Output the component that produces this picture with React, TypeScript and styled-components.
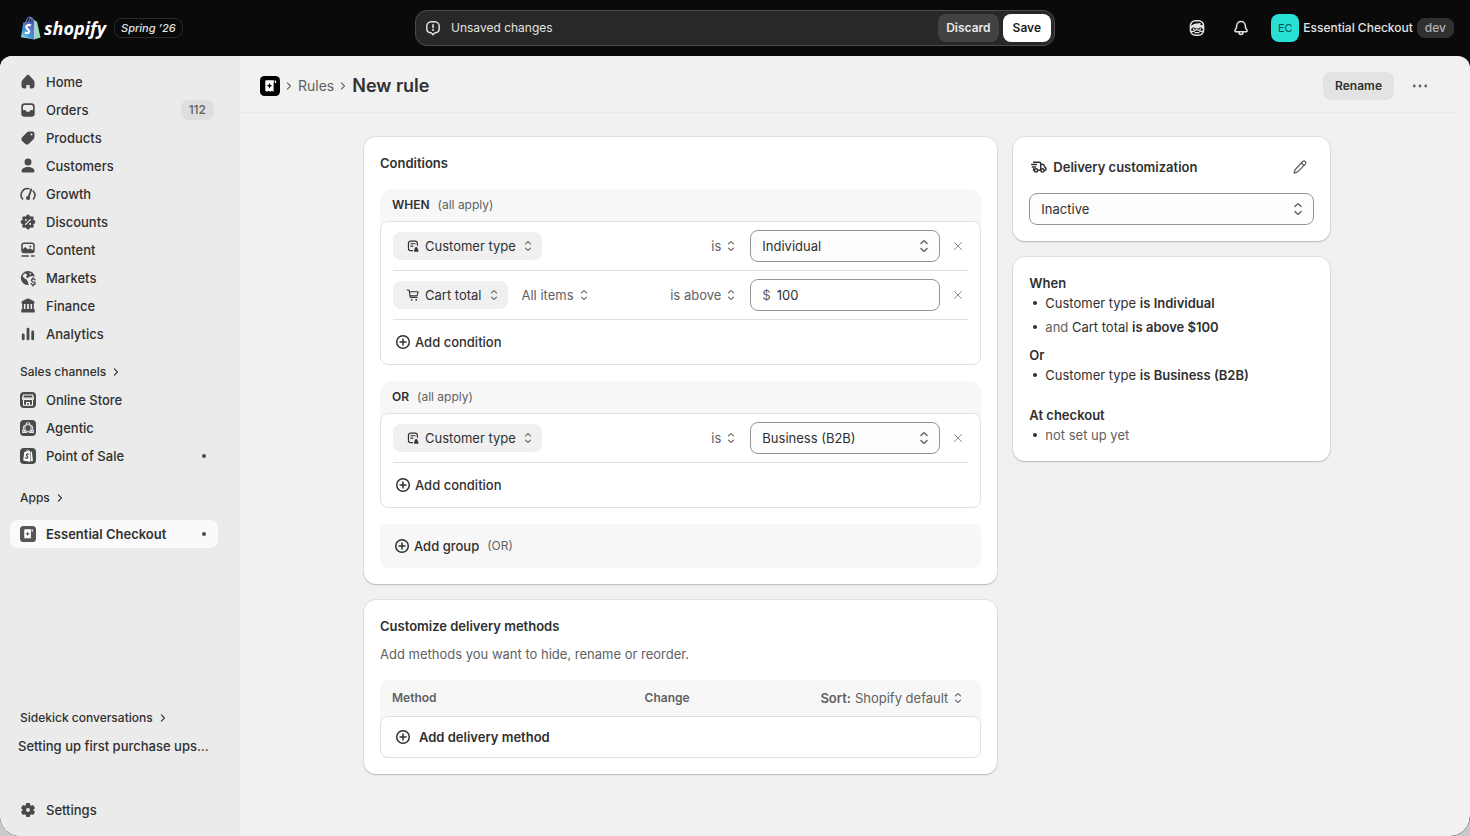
import React, { useId } from "react";
import styled, { createGlobalStyle } from "styled-components";

const color = {
  ink: "#303030",
  strong: "#1f1f1f",
  muted: "#616161",
  icon: "#4a4a4a",
  faint: "#8a8a8a",
  outline: "#949494",
  line: "#e0e0e0",
  subtle: "#f7f7f7",
  page: "#f1f1f1",
  nav: "#ebebeb",
  bar: "#0a0a0a",
};

const GlobalStyle = createGlobalStyle`
  *, *::before, *::after { box-sizing: border-box; }
  body {
    margin: 0;
    background: #c9c9c9;
    color: ${color.ink};
    font-family: Inter, "Liberation Sans", sans-serif;
    font-size: 13px;
    line-height: 20px;
    -webkit-font-smoothing: antialiased;
  }
  button, input, select { font: inherit; color: inherit; }
  button { cursor: pointer; }
  h1, h2, h3, p, ul { margin: 0; padding: 0; }
  h1, h2, h3 { font-size: inherit; }
  a { color: inherit; text-decoration: none; }
`;

/* ---------- icons ---------- */

const Glyph = styled.svg<{ $size?: number }>`
  display: block;
  flex: none;
  width: ${(p) => p.$size ?? 20}px;
  height: ${(p) => p.$size ?? 20}px;
  fill: none;
  stroke: currentColor;
  stroke-width: 1.5;
  stroke-linecap: round;
  stroke-linejoin: round;
`;

type IconProps = { size?: number };
const icon = (body: React.ReactNode) =>
  function Icon({ size }: IconProps) {
    return (
      <Glyph viewBox="0 0 20 20" $size={size} aria-hidden="true">
        {body}
      </Glyph>
    );
  };

const HomeIcon = icon(
  <path
    fill="currentColor"
    stroke="none"
    d="M8.344 3.692a2.25 2.25 0 0 1 3.312 0l3.854 4.19a3.75 3.75 0 0 1 .99 2.538v3.33a2.75 2.75 0 0 1-2.75 2.75h-1.25a.75.75 0 0 1-.75-.75v-2a.75.75 0 0 0-.75-.75h-2a.75.75 0 0 0-.75.75v2a.75.75 0 0 1-.75.75h-1.25a2.75 2.75 0 0 1-2.75-2.75v-3.33c0-.94.353-1.846.99-2.539l3.854-4.189Z"
  />
);
const OrdersIcon = icon(
  <path
    fill="currentColor"
    stroke="none"
    fillRule="evenodd"
    d="M6.500 3.300h7a3.200 3.200 0 0 1 3.200 3.200v7a3.200 3.200 0 0 1-3.200 3.200h-7a3.200 3.200 0 0 1-3.200-3.200v-7a3.200 3.200 0 0 1 3.200-3.200Zm0 1.700A1.500 1.500 0 0 0 5 6.500v3.500h1.900c.5 0 .8.3 1 .7.3.7 1.100 1.200 2.100 1.200s1.800-.5 2.100-1.200c.2-.4.5-.7 1-.7H15V6.500A1.500 1.500 0 0 0 13.500 5Z"
  />
);
const ProductsIcon = icon(
  <path
    fill="currentColor"
    stroke="none"
    fillRule="evenodd"
    d="M11.200 3.500h3.050a2.250 2.250 0 0 1 2.250 2.250V8.800c0 .9-.36 1.770-1 2.400l-4.400 4.400a3 3 0 0 1-4.250 0l-2.450-2.450a3 3 0 0 1 0-4.250l4.400-4.400a3.400 3.400 0 0 1 2.400-1Zm2.300 4a1 1 0 1 0 0-2 1 1 0 0 0 0 2Z"
  />
);
const CustomersIcon = icon(
  <g fill="currentColor" stroke="none">
    <circle cx="10" cy="6" r="3.500" />
    <path d="M10 11c-3.700 0-6.500 1.900-6.500 4 0 .9.700 1.500 1.600 1.500h9.800c.9 0 1.600-.6 1.600-1.500 0-2.100-2.800-4-6.500-4Z" />
  </g>
);
const GrowthIcon = icon(
  <>
    <path strokeWidth="1.600" d="M4.600 15A6.400 6.400 0 0 1 11 4.700M15.200 7a6.400 6.400 0 0 1 .3 8" />
    <path strokeWidth="1.900" d="M13.200 5.500 10.600 13" />
    <circle cx="10.100" cy="14" r="2.100" fill="currentColor" stroke="none" />
  </>
);
const scallops = [0, 1, 2, 3, 4, 5, 6, 7].map((n) => {
  const turn = (n * Math.PI) / 4;
  return [10 + 5.500 * Math.cos(turn), 10 + 5.500 * Math.sin(turn)];
});
const DiscountsIcon = icon(
  <>
    <g fill="currentColor" stroke="none">
      <circle cx="10" cy="10" r="5.900" />
      {scallops.map(([x, y], n) => (
        <circle key={n} cx={x} cy={y} r="1.900" />
      ))}
    </g>
    <path stroke={color.nav} strokeWidth="1.300" d="m7.600 12.400 4.800-4.800" />
    <circle cx="7.900" cy="7.900" r="1" fill={color.nav} stroke="none" />
    <circle cx="12.100" cy="12.100" r="1" fill={color.nav} stroke="none" />
  </>
);
const ContentIcon = icon(
  <>
    <rect x="3.950" y="3.250" width="12.100" height="9.200" rx="2.200" />
    <path
      fill="currentColor"
      stroke="none"
      d="M4 9.800 6.300 7.700c.6-.5 1.300-.5 1.900 0L10 9.400l.9-.6c.6-.4 1.200-.4 1.800 0L16 10.500v1.600l-1.500.9h-9L4 12Z"
    />
    <circle cx="12.300" cy="6.500" r="1.100" fill="currentColor" stroke="none" />
    <path d="M3.950 15.950h6.300M13.500 15.950h2.550" />
  </>
);
const MarketsIcon = icon(
  <>
    <path
      fill="currentColor"
      stroke="none"
      fillRule="evenodd"
      d="M10 3a7 7 0 1 0 1 13.900c-.8-.6-1.200-1.500-.8-2.300l-1.200-2.400c-.5-1-1.400-1-2.200-1.700L4.600 8.400A5.600 5.600 0 0 1 7 5.300l1.700 1.200c.6.400.5 1.200 0 1.600l-.9.900 1.900 1.300c.8-1.400 2.200-2.200 3.600-2 1.300-.8 2.400-.2 3.500.4A7 7 0 0 0 10 3Zm1.200 1.700 2.300.9-1.300 1.300Z"
    />
    <path
      strokeWidth="1.400"
      d="M17 11.700c-.6-.7-1.500-.9-2.300-.7-1.600.3-1.700 2.100-.1 2.600 1.700.4 2.700.8 2.500 2-.3 1.300-2.800 1.500-3.900.2M15 9.700v1M15 17v1"
    />
  </>
);
const FinanceIcon = icon(
  <g fill="currentColor" stroke="none">
    <path d="M8.900 2.800a2.300 2.300 0 0 1 2.200 0l4.500 2.300c1.500.8 1.200 2.900-.4 2.900H4.800c-1.600 0-1.900-2.100-.4-2.900Z" />
    <path d="M4.200 7.500h1.700v6H4.200ZM7.500 7.500h1.600v6H7.500ZM10.900 7.500h1.600v6h-1.600ZM14.100 7.500h1.700v6h-1.700Z" />
    <rect x="3.200" y="13" width="13.600" height="3.600" rx="1.200" />
  </g>
);
const AnalyticsIcon = icon(
  <path strokeWidth="2.800" d="M5.200 11v3.900M10 5.100v9.800M14.700 7.900v7" />
);
const SettingsIcon = icon(
  <>
    <path
      fill="currentColor"
      strokeWidth="1.200"
      d="M8.700 3.700h2.600l.5 1.900 1.300.8 1.900-.6 1.300 2.300-1.400 1.300v1.200l1.400 1.300-1.300 2.300-1.900-.6-1.300.8-.5 1.900H8.700l-.5-1.900-1.300-.8-1.900.6-1.300-2.300 1.400-1.300V9.400L3.700 8.100 5 5.800l1.900.6 1.300-.8Z"
    />
    <circle cx="10" cy="10" r="1.900" fill={color.nav} stroke="none" />
  </>
);
const UpDownIcon = icon(
  <path
    strokeWidth="1.400"
    d="M6.900 7.400 9.500 4.900c.3-.3.700-.3 1 0l2.600 2.500M6.900 12.600l2.600 2.500c.3.300.7.300 1 0l2.600-2.500"
  />
);
const ChevronRight = icon(<path strokeWidth="1.400" d="m8 6.200 3.800 3.800L8 13.800" />);
const PlusCircle = icon(
  <>
    <circle cx="10" cy="10" r="6.300" />
    <path d="M10 7v6M7 10h6" />
  </>
);
const CloseIcon = icon(<path strokeWidth="1.200" d="m5.600 5.600 8.800 8.800M14.400 5.600l-8.800 8.800" />);
const ProfileFieldIcon = icon(
  <>
    <path d="M9.300 15.900H7a2.700 2.700 0 0 1-2.700-2.700V6.500A2.700 2.700 0 0 1 7 3.800h5.800a2.700 2.700 0 0 1 2.700 2.700V9.200M7.300 7.200h5.200M7.300 10.200h2.400" />
    <circle cx="14" cy="13" r="1.900" fill="currentColor" stroke="none" />
    <path
      fill="currentColor"
      stroke="none"
      d="M14 13.800c-1.800 0-2.900 1-2.900 2.200 0 .7.500 1.200 1.100 1.200h3.600c.6 0 1.100-.5 1.100-1.200 0-1.200-1.100-2.200-2.900-2.200Z"
    />
  </>
);
const CartIcon = icon(
  <>
    <path
      strokeWidth="1.400"
      d="M2.800 3.800h1.300c.7 0 1.200.5 1.300 1.200l1 7c.1.600.6 1 1.200 1h7.600M5.600 6h10.700l-.9 4c-.1.600-.6 1-1.200 1H6.500"
    />
    <circle cx="8.300" cy="16" r="1.100" fill="currentColor" stroke="none" />
    <circle cx="14" cy="16" r="1.100" fill="currentColor" stroke="none" />
  </>
);
const TruckIcon = icon(
  <>
    <path d="M4.600 5.250h5.900c.7 0 1.200.5 1.200 1.200v6.300M11.900 7.300h1.400c.8 0 1.500.5 1.800 1.200l.5 1.300.7.500c.4.200.6.600.6 1v.9c0 .6-.5 1.100-1.100 1.100M9.300 13.250h2M4.600 13.250v-1.400M2.700 7.500h4.600M3.400 9.900h3.200" />
    <circle cx="7" cy="13.400" r="1.600" />
    <circle cx="13.500" cy="13.400" r="1.600" />
  </>
);
const PencilIcon = icon(
  <path
    strokeWidth="1.300"
    d="M12.800 4.500a1.850 1.850 0 0 1 2.600 2.600l-7.300 7.300c-.5.500-1 .8-1.700 1l-2.300.6.600-2.300c.2-.7.500-1.200 1-1.700ZM11.400 6l2.600 2.600"
  />
);
const DotsIcon = icon(
  <g fill="currentColor" stroke="none">
    <circle cx="4.300" cy="10" r="1.400" />
    <circle cx="10" cy="10" r="1.400" />
    <circle cx="15.700" cy="10" r="1.400" />
  </g>
);
const AlertIcon = icon(
  <>
    <path d="M8.300 3.800h3.400a4.500 4.500 0 0 1 4.500 4.500v2.200c0 2.300-1.600 4-3.700 4.200-.5.050-.9.250-1.200.6L10 16.600l-1.300-1.300c-.3-.350-.7-.550-1.200-.6-2.100-.2-3.700-1.900-3.700-4.200V8.300a4.500 4.500 0 0 1 4.500-4.500Z" />
    <path strokeWidth="1.600" d="M10 6.900v2.700" />
    <circle cx="10" cy="12.100" r="1" fill="currentColor" stroke="none" />
  </>
);
const BellIcon = icon(
  <>
    <path d="M10 3.500a4.300 4.300 0 0 0-4.300 4.300c0 1.400-.3 2.300-.9 3.200l-.8 1.200c-.4.7 0 1.500.8 1.500h10.400c.8 0 1.200-.8.800-1.500l-.8-1.200c-.6-.9-.9-1.800-.9-3.200A4.300 4.300 0 0 0 10 3.500Z" />
    <path d="M8 14c0 1.500.8 2.500 2 2.500s2-1 2-2.500" />
  </>
);
const SidekickIcon = icon(
  <>
    <rect x="3.400" y="2.800" width="13.200" height="14.400" rx="5" />
    <path
      fill="currentColor"
      stroke="none"
      d="M3 8.200C5 8 6.300 5.600 9 5.600l4.700-.5-.4 1.600 3.700.7v3.300h-1.800c-.7-1.500-3-1.400-3.900-.2h-2.600C7.800 9.300 5.500 9.200 4.800 10.700H3Z"
    />
    <path strokeWidth="1.300" d="M3.700 12.900c1.900 1.200 3.700.5 5-1.100h2.600c1.300 1.600 3.100 2.300 5 1.100M8 14.700h4" />
    <circle cx="6.700" cy="11.100" r=".9" fill="currentColor" stroke="none" />
    <circle cx="13.300" cy="11.100" r=".9" fill="currentColor" stroke="none" />
  </>
);

const StoreTile = icon(
  <>
    <rect x="2" y="2" width="16" height="16" rx="4" fill={color.icon} stroke="none" />
    <g stroke="#fff" strokeWidth="1.100">
      <path d="M5.500 5h9l1 3.200c0 1.700-2.600 1.900-3 .2-.3 1.700-2.300 1.700-2.500 0-.2 1.700-2.200 1.700-2.500 0-.4 1.700-3 1.500-3-.2ZM4.800 8h10.400M5.500 10.500v4.700h9v-4.700" />
      <path d="M8.600 15v-2.500h2.800V15" />
    </g>
  </>
);
const AgenticTile = icon(
  <>
    <rect x="2" y="2" width="16" height="16" rx="4" fill={color.icon} stroke="none" />
    <g stroke="#e6e6e6" strokeWidth="1.100">
      <path d="M7 12V8.300l1.600-1.600h2.800L13 8.300V12l-1.300 1.300H8.300Z" />
      <path d="M8 6.500c0-2.300 4-2.300 4 0M6.500 7.500 5.300 9v3.500M13.500 7.500 14.700 9v3.500M4.800 14.400h4M11.200 14.400h4" />
      <circle cx="5.600" cy="13.500" r="1.100" />
      <circle cx="14.400" cy="13.500" r="1.100" />
    </g>
  </>
);
const PosTile = icon(
  <>
    <rect x="2" y="2" width="16" height="16" rx="4" fill={color.icon} stroke="none" />
    <path fill="#fff" stroke="none" d="m6.200 6.200 5.800-1.400v11L5.200 14.600ZM12.600 5.200l1.300.9 1 8.700-2.300.8Z" />
    <path stroke="#fff" strokeWidth=".9" d="M7.700 6.300c.3-1.700 2.200-3.200 2.900-1.500" />
    <path stroke={color.icon} strokeWidth="1.300" d="M10.600 8.200c-1.100-.6-2.400-.1-2.200.9.200.9 1.600 1.100 1.400 2.300-.2 1-1.500 1-2.300.4" />
  </>
);

function CheckoutTile({ size, tone }: { size?: number; tone: string }) {
  return (
    <Glyph viewBox="0 0 20 20" $size={size} aria-hidden="true">
      <rect width="20" height="20" rx="4.500" fill={tone} stroke="none" />
      <path
        fill="#fff"
        stroke="none"
        d="M6.300 4.200h8.300c.9 0 1.600.7 1.600 1.600v1.100h-2.600v8.900l-1.700-1-1.600 1-1.700-1-1.600 1-1.700-1V5.200c0-.6.400-1 1-1Z"
      />
      <path d="M14.300 4.600v2" stroke={tone} strokeWidth="1" />
      <path fill={tone} stroke="none" d="m9.500 6.800.9 2.200 2 .8-2 .8-.9 2.200-.9-2.200-2-.8 2-.8Z" />
    </Glyph>
  );
}

const BagSvg = styled.svg`
  display: block;
  width: 22px;
  height: 24px;
`;

function ShopifyBag() {
  const id = useId();
  return (
    <BagSvg viewBox="0 0 22 24" aria-hidden="true">
      <defs>
        <linearGradient id={id} x1="0.8" y1="0" x2="0.2" y2="1">
          <stop offset="0" stopColor="#44509c" />
          <stop offset=".35" stopColor="#5577c4" />
          <stop offset=".65" stopColor="#3f93d8" />
          <stop offset="1" stopColor="#9fe0ea" />
        </linearGradient>
      </defs>
      <path d="M6 6.500C6.500 3.500 8.300 1.100 10 1.200c1.600.1 2 2.300 2 4.600M8.500 6.200c.5-2.400 2.200-4.500 3.600-4 1 .5 1.400 2 1.400 3.400" fill="none" stroke="#6a80c4" strokeWidth="1.200" />
      <path d="M3.200 6.600 13.900 4.200v19.200L1 21.200Z" fill={`url(#${id})`} />
      <path d="m13.900 4.200 3.200 1.500 3.400 15.700-6.600 2Z" fill="#8fdcae" />
      <path d="m13.900 4.200 2 .9.600 17.500-2.600.8Z" fill="#bfc4ee" opacity=".8" />
      <path d="M10.900 9.400c-2.200-1.100-4.800-.1-4.500 2 .3 1.900 3.100 2.100 2.800 4.200-.3 1.900-2.700 1.800-4.200.7" fill="none" stroke="#fff" strokeWidth="2.300" />
    </BagSvg>
  );
}

/* ---------- top bar ---------- */

const Shell = styled.div`
  display: flex;
  flex-direction: column;
  min-height: 100vh;
  overflow: hidden;
  border-radius: 0 0 20px 20px;
  background: ${color.bar};
`;

const TopBar = styled.header`
  display: grid;
  grid-template-columns: 1fr minmax(0, 640px) 1fr;
  align-items: center;
  height: 56px;
  padding: 0 16px;
  color: #e3e3e3;
  font-size: 12px;
`;

const Brand = styled.a`
  display: flex;
  align-items: center;
  gap: 2px;
  padding-left: 4px;
`;

const Wordmark = styled.span`
  color: #fff;
  font: italic 700 18px/24px "Open Sans", "Noto Sans", sans-serif;
`;

const Season = styled.span`
  margin-left: 6px;
  padding: 0 6px;
  border: 1px solid #2a2a2a;
  border-radius: 8px;
  font-size: 11px;
  font-style: italic;
  font-weight: 500;
  line-height: 18px;
`;

const SaveBar = styled.div`
  display: flex;
  align-items: center;
  gap: 4px;
  height: 36px;
  padding: 0 3px 0 7px;
  border: 1px solid #4a4a4a;
  border-radius: 12px;
  background: #282828;
`;

const SaveText = styled.span`
  flex: 1;
  padding-left: 4px;
`;

const BarButton = styled.button<{ $primary?: boolean }>`
  height: 28px;
  padding: 0 ${(p) => (p.$primary ? 10 : 8)}px;
  border: 0;
  border-radius: 8px;
  background: ${(p) => (p.$primary ? "#fff" : "#424242")};
  color: ${(p) => (p.$primary ? color.strong : "#e9e9e9")};
  font-weight: 600;
`;

const BarTools = styled.div`
  display: flex;
  align-items: center;
  justify-content: flex-end;
  gap: 16px;
`;

const IconButton = styled.button`
  display: grid;
  place-items: center;
  width: 28px;
  height: 28px;
  padding: 0;
  border: 0;
  border-radius: 8px;
  background: none;
`;

const Account = styled.button`
  display: flex;
  align-items: center;
  gap: 4px;
  padding: 0;
  border: 0;
  background: none;
  font-weight: 500;
`;

const Avatar = styled.span`
  display: grid;
  place-items: center;
  width: 28px;
  height: 28px;
  border-radius: 8px;
  background: #29e0d5;
  color: #0b4f4a;
  font-size: 11px;
  font-weight: 400;
`;

const DevTag = styled.span`
  padding: 0 8px;
  border-radius: 8px;
  background: #303030;
  color: #b5b5b5;
`;

/* ---------- navigation ---------- */

const Frame = styled.div`
  display: flex;
  flex: 1;
  overflow: hidden;
  border-radius: 12px 12px 20px 20px;
  background: ${color.page};
`;

const Sidebar = styled.nav`
  display: flex;
  flex: none;
  flex-direction: column;
  width: 240px;
  padding: 12px 22px 12px 10px;
  background: ${color.nav};
`;

const NavItem = styled.a<{ $active?: boolean }>`
  display: flex;
  align-items: center;
  gap: 8px;
  height: 28px;
  padding: 0 8px;
  border-radius: 8px;
  background: ${(p) => (p.$active ? "#fafafa" : "none")};
  font-weight: ${(p) => (p.$active ? 600 : 500)};
  white-space: nowrap;
  & > svg { color: ${color.icon}; }
`;

const NavLabel = styled.span`
  flex: 1;
  overflow: hidden;
  text-overflow: ellipsis;
`;

const Count = styled.span`
  margin-right: -4px;
  padding: 0 8px;
  border-radius: 8px;
  background: #dedede;
  color: ${color.muted};
  font-size: 12px;
`;

const Dot = styled.span`
  width: 4px;
  height: 4px;
  margin-right: 4px;
  border-radius: 50%;
  background: ${color.icon};
`;

const TileSlot = styled.span`
  display: grid;
  place-items: center;
  width: 20px;
`;

const NavHeading = styled.button`
  display: flex;
  align-items: center;
  gap: 2px;
  height: 28px;
  padding: 0 10px;
  border: 0;
  background: none;
  font-size: 12px;
  font-weight: 500;
`;

const NavSection = styled.div<{ $top: number; $gap?: number }>`
  display: flex;
  flex-direction: column;
  gap: ${(p) => p.$gap ?? 0}px;
  margin-top: ${(p) => p.$top}px;
`;

const NavFooter = styled.div`
  display: flex;
  flex-direction: column;
  margin-top: auto;
`;

const NavSettings = styled.div`
  margin-top: 36px;
`;

/* ---------- page ---------- */

const Main = styled.main`
  flex: 1;
  min-width: 0;
  padding-right: 16px;
`;

const PageHeader = styled.header`
  display: flex;
  align-items: center;
  justify-content: space-between;
  padding: 16px 20px 12px;
  border-bottom: 1px solid #e8e8e8;
`;

const Crumbs = styled.nav`
  display: flex;
  align-items: center;
  gap: 1px;
  color: ${color.muted};
  font-size: 14px;
`;

const Title = styled.h1`
  color: ${color.ink};
  font-size: 18px;
  font-weight: 600;
  line-height: 24px;
`;

const HeaderActions = styled.div`
  display: flex;
  align-items: center;
  gap: 12px;
  color: ${color.muted};
`;

const RenameButton = styled.button`
  height: 28px;
  padding: 0 12px;
  border: 0;
  border-radius: 8px;
  background: #e3e3e3;
  color: ${color.ink};
  font-size: 12px;
  font-weight: 600;
`;

const Columns = styled.div`
  display: grid;
  grid-template-columns: minmax(0, 2fr) minmax(0, 1fr);
  align-items: start;
  gap: 16px;
  max-width: 998px;
  margin: 0 auto;
  padding: 24px 16px;
`;

const Stack = styled.div`
  display: flex;
  flex-direction: column;
  gap: 16px;
`;

const Card = styled.section<{ $gap?: number }>`
  display: flex;
  flex-direction: column;
  gap: ${(p) => p.$gap ?? 16}px;
  padding: 16px;
  border-radius: 12px;
  background: #fff;
  box-shadow: 0 0 0 1px rgba(0, 0, 0, 0.07), 0 1px 1px rgba(0, 0, 0, 0.12),
    0 2px 3px rgba(0, 0, 0, 0.04);
`;

const CardTitle = styled.h2`
  font-weight: 600;
`;

const Group = styled.section`
  border-radius: 12px 12px 8px 8px;
  background: ${color.subtle};
`;

const GroupHead = styled.h3`
  display: flex;
  gap: 8px;
  padding: 6px 12px;
  font-size: 12px;
  font-weight: 600;
`;

const Hint = styled.span`
  color: ${color.muted};
  font-size: 12px;
  font-weight: 400;
`;

const GroupBody = styled.div`
  padding: 0 12px;
  border: 1px solid ${color.line};
  border-radius: 8px;
  background: #fff;
`;

const Row = styled.div`
  display: flex;
  align-items: center;
  gap: 8px;
  padding: 8px 0;
  border-bottom: 1px solid ${color.line};
`;

const RowFill = styled.div`
  flex: 1;
`;

const Pill = styled.label`
  display: flex;
  align-items: center;
  gap: 4px;
  height: 28px;
  padding: 0 6px 0 12px;
  border-radius: 8px;
  background: #f0f0f0;
`;

const InlineLabel = styled.label`
  display: flex;
  align-items: center;
  gap: 2px;
  padding: 0 3px 0 6px;
  color: ${color.muted};
`;

const BareSelect = styled.select`
  field-sizing: content;
  appearance: none;
  margin: 0;
  padding: 0;
  border: 0;
  outline: 0;
  background: none;
`;

const ChevronSlot = styled.span`
  display: grid;
  flex: none;
  place-items: center;
  color: ${color.muted};
  pointer-events: none;
`;

const Field = styled.label<{ $wide?: boolean; $plain?: boolean }>`
  display: grid;
  align-items: center;
  grid-template-columns: ${(p) => (p.$plain ? "auto minmax(0, 1fr)" : "minmax(0, 1fr) 20px")};
  width: ${(p) => (p.$wide ? "auto" : "190px")};
  height: 32px;
  padding: 0 5px 0 11px;
  border: 1px solid ${color.outline};
  border-radius: 8px;
  background: ${(p) => (p.$plain ? "#fff" : "#fdfdfd")};
  color: ${color.ink};
`;

const FieldSelect = styled.select`
  grid-area: 1 / 1 / 2 / 3;
  width: 100%;
  height: 30px;
  appearance: none;
  padding: 0;
  border: 0;
  outline: 0;
  background: none;
`;

const FieldChevron = styled(ChevronSlot)`
  grid-area: 1 / 2 / 2 / 3;
`;

const Currency = styled.span`
  padding-right: 6px;
  color: ${color.muted};
`;

const AmountInput = styled.input`
  min-width: 0;
  padding: 0;
  border: 0;
  outline: 0;
  background: none;
`;

const RemoveButton = styled(IconButton)`
  width: 20px;
  height: 20px;
  color: ${color.faint};
`;

const AddButton = styled.button<{ $loose?: boolean; $tall?: boolean; $inset?: boolean }>`
  display: flex;
  align-items: center;
  gap: ${(p) => (p.$loose ? 6 : 2)}px;
  width: 100%;
  height: ${(p) => (p.$tall ? 44 : 40)}px;
  padding: 0 ${(p) => (p.$inset ? 12 : 0)}px;
  border: 0;
  border-radius: 8px;
  background: ${(p) => (p.$inset && !p.$loose ? color.subtle : "none")};
  font-weight: ${(p) => (p.$loose ? 600 : 500)};
`;

const AddHint = styled(Hint)`
  margin-left: 6px;
`;

const Intro = styled.p`
  color: ${color.muted};
  padding-bottom: 8px;
`;

const MethodTable = styled.table`
  width: 100%;
  border-spacing: 0;
  border-radius: 8px;
  background: ${color.subtle};
`;

const Th = styled.th<{ $width?: string }>`
  width: ${(p) => p.$width ?? "auto"};
  height: 36px;
  padding: 0 12px;
  color: ${color.muted};
  font-size: 12px;
  font-weight: 600;
  text-align: left;
`;

const SortLabel = styled.label`
  display: flex;
  align-items: center;
  justify-content: flex-end;
  gap: 2px;
  padding-right: 3px;
  font-size: 13px;
  font-weight: 600;
  white-space: nowrap;
  & select { font-weight: 400; }
`;

const SortName = styled.span`
  padding-right: 2px;
`;

const MethodCell = styled.td`
  padding: 0;
  border: 1px solid ${color.line};
  border-radius: 8px;
  background: #fff;
`;

const SideHead = styled.div`
  display: flex;
  align-items: center;
  gap: 4px;
  & > h2 { flex: 1; }
`;

const EditButton = styled(IconButton)`
  color: ${color.muted};
`;

const Summary = styled.div<{ $top?: number }>`
  margin-top: ${(p) => p.$top ?? 0}px;
`;

const SummaryTitle = styled.h3`
  font-weight: 600;
`;

const SummaryList = styled.ul`
  display: flex;
  flex-direction: column;
  gap: 4px;
  list-style: none;
`;

const SummaryItem = styled.li<{ $muted?: boolean }>`
  display: flex;
  align-items: center;
  gap: 8px;
  padding-left: 4px;
  color: ${(p) => (p.$muted ? color.muted : color.ink)};
  &::before {
    width: 4px;
    height: 4px;
    border-radius: 50%;
    background: ${color.ink};
    content: "";
  }
  & b { font-weight: 600; }
  & i { color: ${color.muted}; font-style: normal; }
`;

/* ---------- composition ---------- */

const navItems: [string, React.ComponentType<IconProps>, string?][] = [
  ["Home", HomeIcon],
  ["Orders", OrdersIcon, "112"],
  ["Products", ProductsIcon],
  ["Customers", CustomersIcon],
  ["Growth", GrowthIcon],
  ["Discounts", DiscountsIcon],
  ["Content", ContentIcon],
  ["Markets", MarketsIcon],
  ["Finance", FinanceIcon],
  ["Analytics", AnalyticsIcon],
];

const channels: [string, React.ComponentType<IconProps>, boolean?][] = [
  ["Online Store", StoreTile],
  ["Agentic", AgenticTile],
  ["Point of Sale", PosTile, true],
];

function InlineSelect({ label, value }: { label: string; value: string }) {
  return (
    <InlineLabel>
      <BareSelect aria-label={label}>
        <option>{value}</option>
      </BareSelect>
      <ChevronSlot>
        <UpDownIcon size={16} />
      </ChevronSlot>
    </InlineLabel>
  );
}

function SubjectSelect({ glyph, value }: { glyph: React.ReactNode; value: string }) {
  return (
    <Pill>
      {glyph}
      <BareSelect aria-label="Condition subject">
        <option>{value}</option>
      </BareSelect>
      <ChevronSlot>
        <UpDownIcon size={16} />
      </ChevronSlot>
    </Pill>
  );
}

function SelectField({ label, value, wide }: { label: string; value: string; wide?: boolean }) {
  return (
    <Field $wide={wide}>
      <FieldSelect aria-label={label}>
        <option>{value}</option>
      </FieldSelect>
      <FieldChevron>
        <UpDownIcon />
      </FieldChevron>
    </Field>
  );
}

function CustomerTypeRow({ value }: { value: string }) {
  return (
    <Row>
      <SubjectSelect glyph={<ProfileFieldIcon size={16} />} value="Customer type" />
      <RowFill />
      <InlineSelect label="Operator" value="is" />
      <SelectField label="Customer type" value={value} />
      <RemoveButton aria-label="Remove condition">
        <CloseIcon size={16} />
      </RemoveButton>
    </Row>
  );
}

function ConditionGroup({ name, children }: { name: string; children: React.ReactNode }) {
  return (
    <Group>
      <GroupHead>
        {name} <Hint>(all apply)</Hint>
      </GroupHead>
      <GroupBody>
        {children}
        <AddButton $tall>
          <PlusCircle />
          Add condition
        </AddButton>
      </GroupBody>
    </Group>
  );
}

export default function App() {
  return (
    <>
      <GlobalStyle />
      <Shell>
        <TopBar>
          <Brand href="#">
            <ShopifyBag />
            <Wordmark>shopify</Wordmark>
            <Season>Spring ’26</Season>
          </Brand>
          <SaveBar>
            <AlertIcon />
            <SaveText>Unsaved changes</SaveText>
            <BarButton>Discard</BarButton>
            <BarButton $primary>Save</BarButton>
          </SaveBar>
          <BarTools>
            <IconButton aria-label="Sidekick">
              <SidekickIcon />
            </IconButton>
            <IconButton aria-label="Notifications">
              <BellIcon />
            </IconButton>
            <Account>
              <Avatar>EC</Avatar>
              Essential Checkout
              <DevTag>dev</DevTag>
            </Account>
          </BarTools>
        </TopBar>

        <Frame>
          <Sidebar aria-label="Main">
            {navItems.map(([name, Icon, count]) => (
              <NavItem href="#" key={name}>
                <Icon />
                <NavLabel>{name}</NavLabel>
                {count && <Count>{count}</Count>}
              </NavItem>
            ))}
            <NavSection $top={10}>
              <NavHeading>
                Sales channels
                <ChevronRight size={16} />
              </NavHeading>
              {channels.map(([name, Icon, dot]) => (
                <NavItem href="#" key={name}>
                  <Icon />
                  <NavLabel>{name}</NavLabel>
                  {dot && <Dot />}
                </NavItem>
              ))}
            </NavSection>
            <NavSection $top={14} $gap={8}>
              <NavHeading>
                Apps
                <ChevronRight size={16} />
              </NavHeading>
              <NavItem href="#" $active>
                <TileSlot>
                  <CheckoutTile size={16} tone="#555" />
                </TileSlot>
                <NavLabel>Essential Checkout</NavLabel>
                <Dot />
              </NavItem>
            </NavSection>
            <NavFooter>
              <NavHeading>
                Sidekick conversations
                <ChevronRight size={16} />
              </NavHeading>
              <NavItem href="#">Setting up first purchase ups...</NavItem>
              <NavSettings>
                <NavItem href="#">
                  <SettingsIcon />
                  <NavLabel>Settings</NavLabel>
                </NavItem>
              </NavSettings>
            </NavFooter>
          </Sidebar>

          <Main>
            <PageHeader>
              <Crumbs aria-label="Breadcrumb">
                <CheckoutTile tone="#000" />
                <ChevronRight size={16} />
                <a href="#">Rules</a>
                <ChevronRight size={16} />
                <Title>New rule</Title>
              </Crumbs>
              <HeaderActions>
                <RenameButton>Rename</RenameButton>
                <IconButton aria-label="More actions">
                  <DotsIcon />
                </IconButton>
              </HeaderActions>
            </PageHeader>

            <Columns>
              <Stack>
                <Card>
                  <CardTitle>Conditions</CardTitle>
                  <ConditionGroup name="WHEN">
                    <CustomerTypeRow value="Individual" />
                    <Row>
                      <SubjectSelect glyph={<CartIcon size={16} />} value="Cart total" />
                      <InlineSelect label="Items" value="All items" />
                      <RowFill />
                      <InlineSelect label="Operator" value="is above" />
                      <Field $plain>
                        <Currency>$</Currency>
                        <AmountInput aria-label="Amount" defaultValue="100" />
                      </Field>
                      <RemoveButton aria-label="Remove condition">
                        <CloseIcon size={16} />
                      </RemoveButton>
                    </Row>
                  </ConditionGroup>
                  <ConditionGroup name="OR">
                    <CustomerTypeRow value="Business (B2B)" />
                  </ConditionGroup>
                  <AddButton $tall $inset>
                    <PlusCircle />
                    Add group <AddHint>(OR)</AddHint>
                  </AddButton>
                </Card>

                <Card $gap={8}>
                  <CardTitle>Customize delivery methods</CardTitle>
                  <Intro>Add methods you want to hide, rename or reorder.</Intro>
                  <MethodTable>
                    <thead>
                      <tr>
                        <Th $width="42%">Method</Th>
                        <Th>Change</Th>
                        <Th>
                          <SortLabel>
                            <SortName>Sort:</SortName>
                            <BareSelect>
                              <option>Shopify default</option>
                            </BareSelect>
                            <UpDownIcon size={16} />
                          </SortLabel>
                        </Th>
                      </tr>
                    </thead>
                    <tbody>
                      <tr>
                        <MethodCell colSpan={3}>
                          <AddButton $loose $inset>
                            <PlusCircle />
                            Add delivery method
                          </AddButton>
                        </MethodCell>
                      </tr>
                    </tbody>
                  </MethodTable>
                </Card>
              </Stack>

              <Stack>
                <Card $gap={12}>
                  <SideHead>
                    <TruckIcon />
                    <CardTitle>Delivery customization</CardTitle>
                    <EditButton aria-label="Edit">
                      <PencilIcon />
                    </EditButton>
                  </SideHead>
                  <SelectField wide label="Status" value="Inactive" />
                </Card>

                <Card $gap={0}>
                  <Summary>
                    <SummaryTitle>When</SummaryTitle>
                    <SummaryList>
                      <SummaryItem>
                        <span>
                          Customer type <b>is Individual</b>
                        </span>
                      </SummaryItem>
                      <SummaryItem>
                        <span>
                          <i>and</i> Cart total <b>is above $100</b>
                        </span>
                      </SummaryItem>
                    </SummaryList>
                  </Summary>
                  <Summary $top={8}>
                    <SummaryTitle>Or</SummaryTitle>
                    <SummaryList>
                      <SummaryItem>
                        <span>
                          Customer type <b>is Business (B2B)</b>
                        </span>
                      </SummaryItem>
                    </SummaryList>
                  </Summary>
                  <Summary $top={20}>
                    <SummaryTitle>At checkout</SummaryTitle>
                    <SummaryList>
                      <SummaryItem $muted>not set up yet</SummaryItem>
                    </SummaryList>
                  </Summary>
                </Card>
              </Stack>
            </Columns>
          </Main>
        </Frame>
      </Shell>
    </>
  );
}
